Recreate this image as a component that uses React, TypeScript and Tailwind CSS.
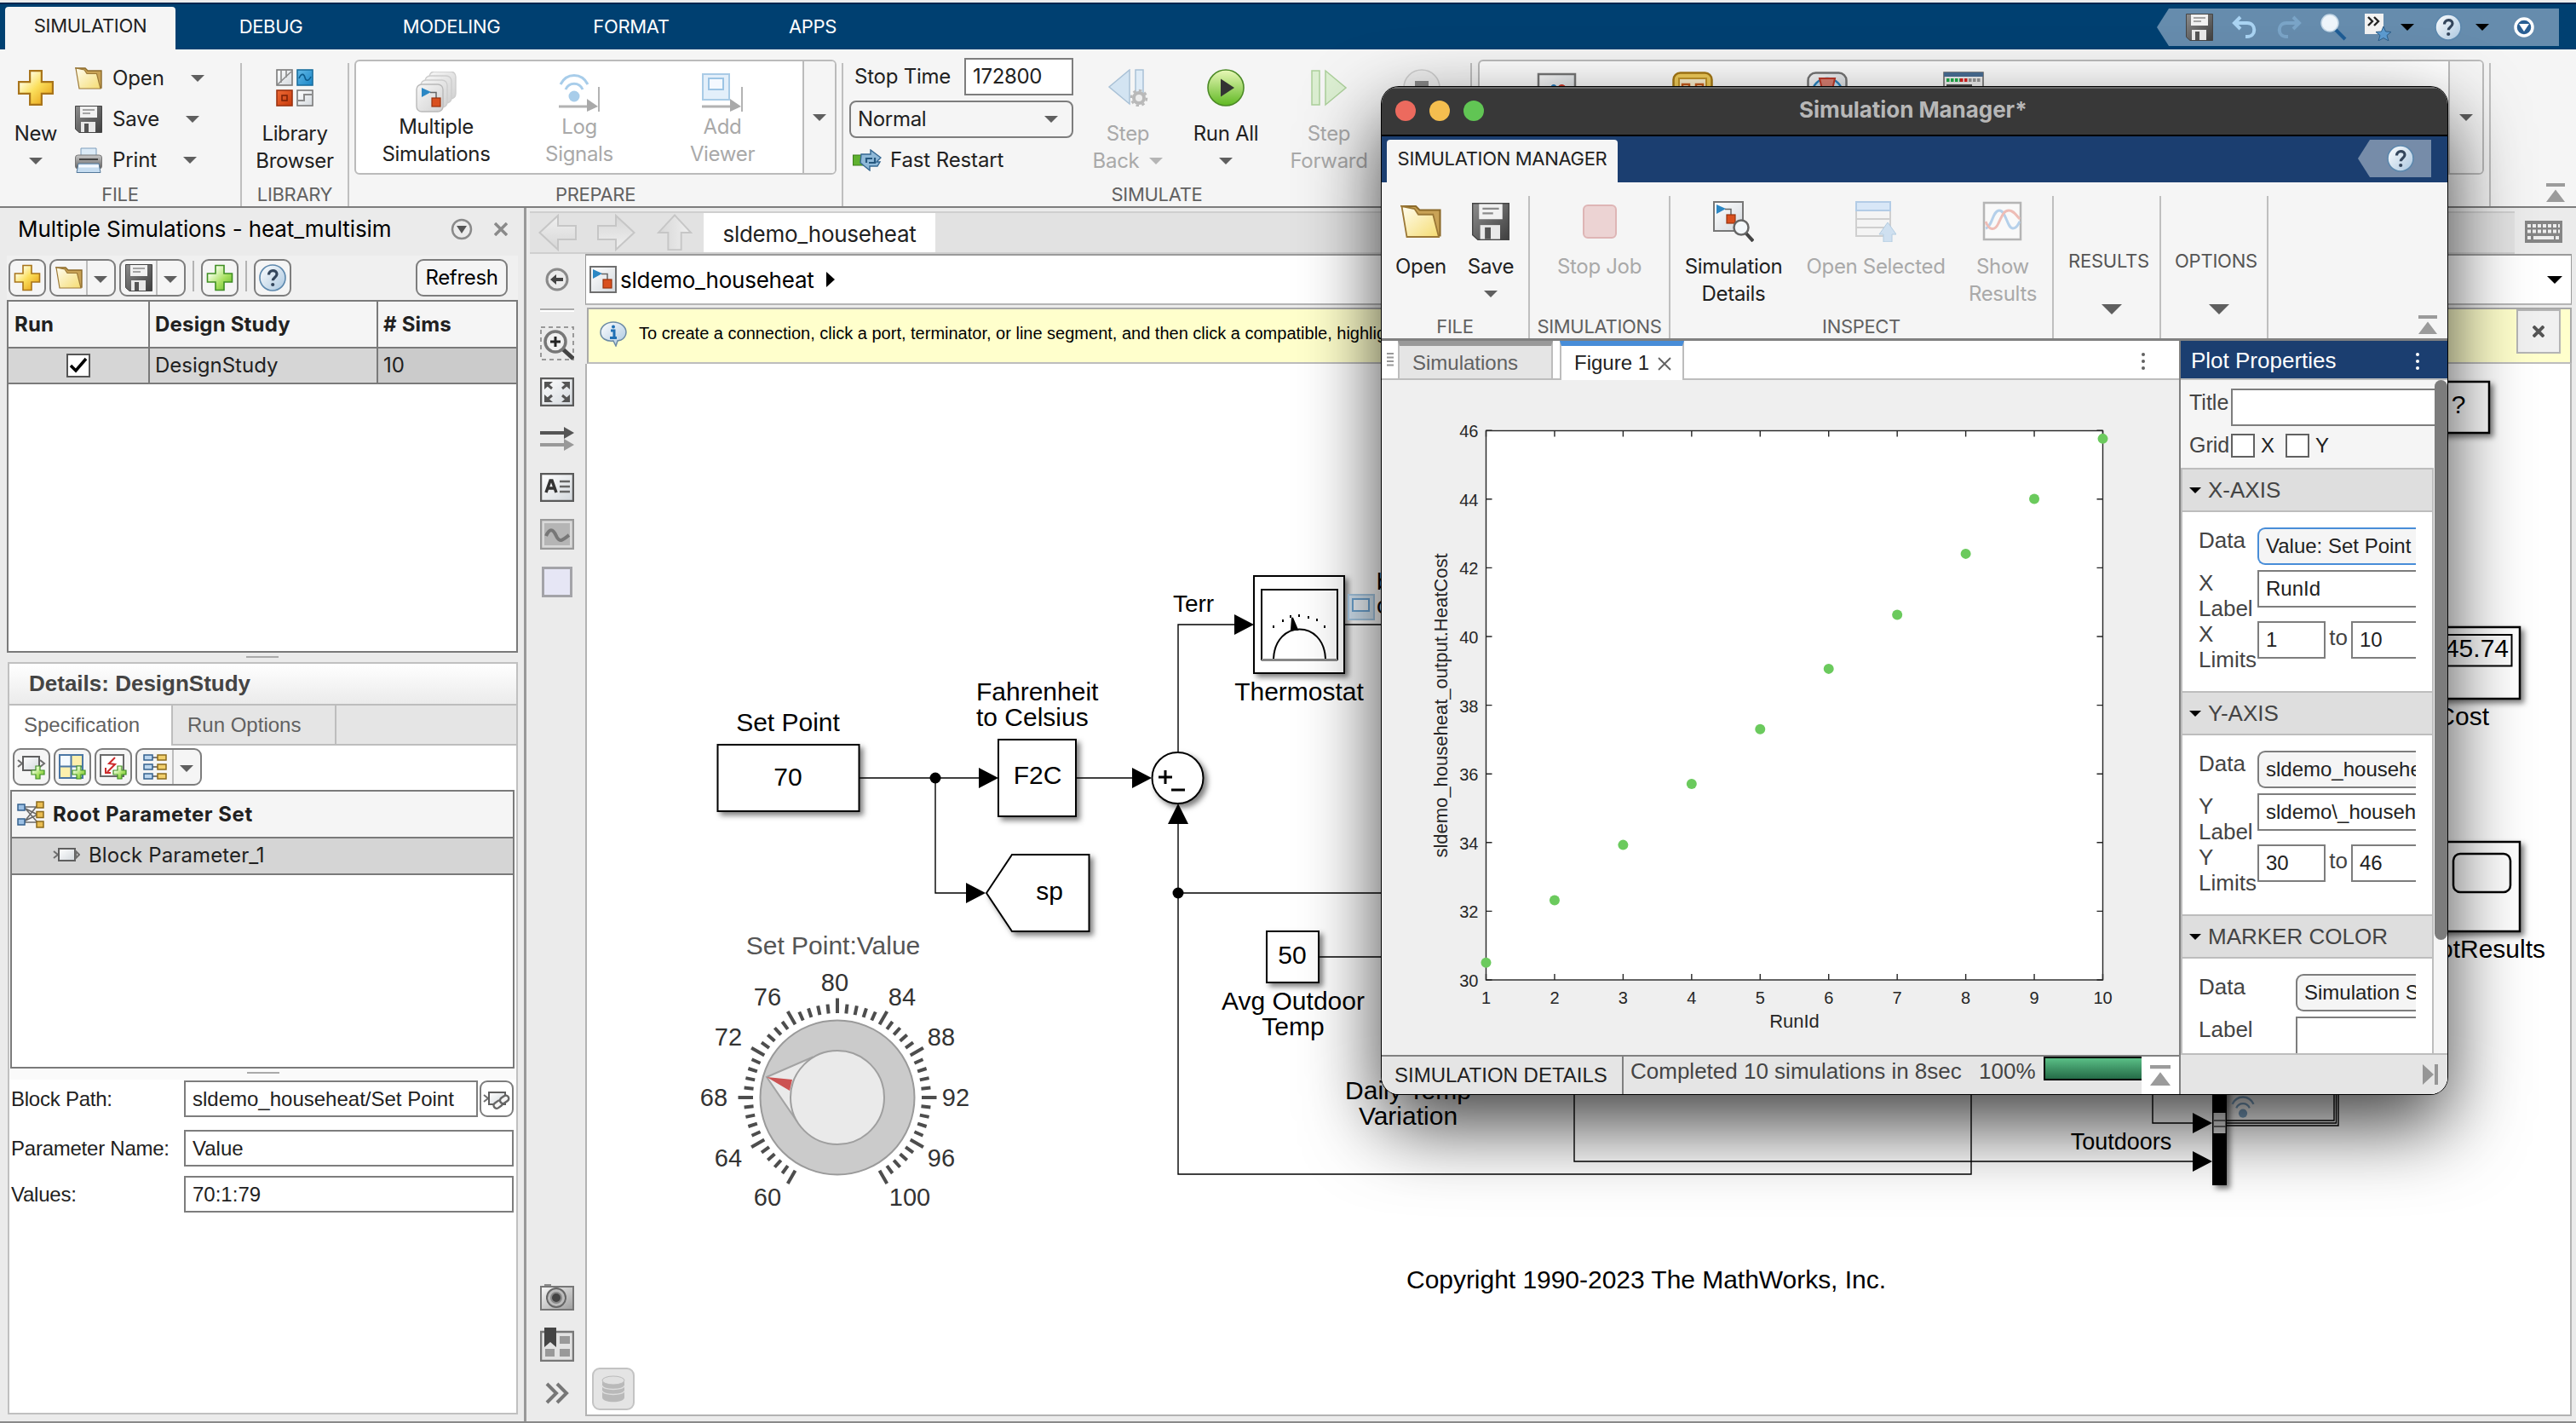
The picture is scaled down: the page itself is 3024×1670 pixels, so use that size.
import React from "react";

type IconProps = { className?: string };

/* ---------- shared gradients ---------- */
function Gradients() {
  const v = (id: string, a: string, b: string, diag = false) => (
    <linearGradient id={id} x1="0" y1="0" x2={diag ? "1" : "0"} y2="1">
      <stop offset="0" stopColor={a} />
      <stop offset="1" stopColor={b} />
    </linearGradient>
  );
  return (
    <svg className="absolute h-0 w-0" aria-hidden="true">
      <defs>
        <linearGradient id="gold" x1="0" y1="0" x2="1" y2="1">
          <stop offset="0.2" stopColor="#fffbd8" />
          <stop offset="0.5" stopColor="#fbdf5c" />
          <stop offset="0.9" stopColor="#e8a317" />
        </linearGradient>
        <linearGradient id="lime" x1="0" y1="0" x2="1" y2="1">
          <stop offset="0.2" stopColor="#f4ffe8" />
          <stop offset="0.6" stopColor="#a8e060" />
          <stop offset="1" stopColor="#5db52a" />
        </linearGradient>
        {v("folder", "#fffdf0", "#f5dc72", true)}
        {v("disk", "#8d8d8d", "#3f3f3f", true)}
        {v("paper", "#ffffff", "#d3d8dd", true)}
        {v("run", "#e9f8b8", "#5fb822")}
        {v("help", "#ffffff", "#a9c6df", true)}
        {v("blue", "#63b9e6", "#1a86c7", true)}
        {v("red", "#ef6a35", "#c63a0c", true)}
        {v("printer", "#c9c9c9", "#5d5d5d")}
        {v("steel", "#fafafa", "#9c9c9c", true)}
        {v("grayArrow", "#f0f0f0", "#d6d6d6")}
        {v("stack", "#f6f6f6", "#d2d2d2", true)}
      </defs>
    </svg>
  );
}

/* ---------- icons ---------- */
const PLUS = "M11 1.5h10v9.5h9.5v10H21v9.5H11V21H1.5V11H11z";
function Plus({ className, green }: IconProps & { green?: boolean }) {
  return (
    <svg viewBox="0 0 32 32" className={className}>
      <path d={PLUS} fill={green ? "url(#lime)" : "url(#gold)"} stroke={green ? "#3f8f23" : "#a8741a"} strokeWidth="1.6" />
    </svg>
  );
}
function Folder({ className }: IconProps) {
  return (
    <svg viewBox="0 0 32 28" className={className}>
      <path d="M1 2h11l3 3h16v20h-6z" fill="#c9a356" stroke="#8c6a2a" strokeWidth="1.4" />
      <path d="M1 2l4 24h25L25.500 8.500H14l-3-4.500z" fill="url(#folder)" stroke="#9b7836" strokeWidth="1.2" />
    </svg>
  );
}
function Disk({ className }: IconProps) {
  return (
    <svg viewBox="0 0 32 32" className={className}>
      <path d="M0.500 0.500h31v31H5l-4.500-4z" fill="url(#disk)" stroke="#444" />
      <path d="M6 1h20v13H6z" fill="#f1f1f1" />
      <path d="M9 5h14M9 9h9" stroke="#8b8b8b" strokeWidth="1.6" />
      <path d="M7 19h17v12H7z" fill="#e9e9e9" />
      <path d="M11 21h5v10h-5z" fill="#555" />
    </svg>
  );
}
function Printer({ className }: IconProps) {
  return (
    <svg viewBox="0 0 32 31" className={className}>
      <path d="M7 1h18v9H7z" fill="#dcebf7" stroke="#7c9dbb" />
      <rect x="0.500" y="9" width="31" height="16" rx="3" fill="url(#printer)" stroke="#777" />
      <path d="M5 14h22" stroke="#444" strokeWidth="2" />
      <path d="M4 19h24l2 10.500H2z" fill="#c5dcf0" stroke="#54789a" />
      <path d="M4 22h24" stroke="#f4f9ff" strokeWidth="3" />
    </svg>
  );
}
function LibraryGrid({ className }: IconProps) {
  return (
    <svg viewBox="0 0 44 44" className={className}>
      <g strokeWidth="1.6">
        <rect x="1" y="1" width="18" height="18" fill="url(#paper)" stroke="#7a7a7a" />
        <path d="M6 1v15M12 1v9M2 18L18 3" stroke="#8a8a8a" fill="none" />
        <rect x="25" y="1" width="18" height="18" fill="url(#blue)" stroke="#1b6f9f" />
        <path d="M27 11c3-7 6-5 7-1s4 5 7-1" stroke="#0d5b8c" fill="none" />
        <rect x="1" y="25" width="18" height="18" fill="url(#red)" stroke="#9c3311" />
        <rect x="7" y="31" width="6" height="6" fill="none" stroke="#7e2408" />
        <rect x="25" y="25" width="18" height="18" fill="url(#paper)" stroke="#7a7a7a" />
        <path d="M26 37h7v-7h9" stroke="#8a8a8a" fill="none" strokeWidth="2" />
      </g>
    </svg>
  );
}
function ModelGlyph() {
  return (
    <g>
      <path d="M4 4l11 5-11 6z" fill="#2b87c4" />
      <path d="M14 9.500h7v8" fill="none" stroke="#666" strokeWidth="1.500" />
      <rect x="16" y="16" width="10" height="10" fill="#d9501f" stroke="#98320e" strokeWidth="1.200" />
    </g>
  );
}
function MultiSim({ className }: IconProps) {
  return (
    <svg viewBox="0 0 48 48" className={className}>
      {[15, 10, 5].map((o) => (
        <rect key={o} x={1 + o} y={15 - o} width="31" height="32" rx="6" fill="url(#stack)" stroke="#cdcdcd" strokeWidth="1.400" />
      ))}
      <rect x="1" y="15" width="31" height="32" rx="6" fill="url(#stack)" stroke="#b9b9b9" strokeWidth="1.400" />
      <g transform="translate(3 15)">
        <ModelGlyph />
      </g>
    </svg>
  );
}
function WifiArcs({ color }: { color: string }) {
  return (
    <g fill="none" stroke={color}>
      <path d="M2 15C9 1 27 1 34 15" strokeWidth="3" />
      <path d="M8 21c4-9 16-9 20 0" strokeWidth="3" />
      <circle cx="18" cy="29" r="6.500" fill={color} stroke="none" />
    </g>
  );
}
function LogSignals({ className }: IconProps) {
  return (
    <svg viewBox="0 0 48 48" className={className}>
      <WifiArcs color="#a8cdea" />
      <path d="M0 41h40" stroke="#b3b3b3" strokeWidth="3" />
      <path d="M33 32v15l13-6z" fill="#a9a9a9" />
      <path d="M47 18v29" stroke="#b3b3b3" strokeWidth="2" />
    </svg>
  );
}
function AddViewer({ className }: IconProps) {
  return (
    <svg viewBox="0 0 48 48" className={className}>
      <rect x="1" y="3" width="31" height="30" fill="#e3effa" stroke="#a9cbe6" strokeWidth="2" />
      <rect x="8" y="8" width="17" height="13" fill="#f4f9ff" stroke="#9cc4e4" strokeWidth="2" />
      <path d="M0 41h40" stroke="#b3b3b3" strokeWidth="3" />
      <path d="M33 32v15l13-6z" fill="#a9a9a9" />
      <path d="M47 18v29" stroke="#b3b3b3" strokeWidth="2" />
    </svg>
  );
}
function StepBack({ className }: IconProps) {
  return (
    <svg viewBox="0 0 48 44" className={className}>
      <path d="M2 21L26 1v40z" fill="#d3e4f2" stroke="#a9c1d6" strokeWidth="1.500" />
      <rect x="33" y="1" width="9" height="32" fill="#dfecf7" stroke="#a9c1d6" strokeWidth="1.500" />
      <circle cx="37" cy="34" r="6" fill="#ededed" stroke="#b9b9b9" strokeWidth="4" />
      <circle cx="37" cy="34" r="9" fill="none" stroke="#b9b9b9" strokeWidth="2.500" strokeDasharray="3.500 3.500" />
    </svg>
  );
}
function RunIcon({ className }: IconProps) {
  return (
    <svg viewBox="0 0 44 44" className={className}>
      <circle cx="22" cy="22" r="21" fill="url(#run)" stroke="#4c8a26" strokeWidth="1.600" />
      <path d="M16 11.500v21L32 22z" fill="#333" />
    </svg>
  );
}
function StepForward({ className }: IconProps) {
  return (
    <svg viewBox="0 0 44 44" className={className}>
      <rect x="2" y="2" width="9" height="40" fill="#dcefd2" stroke="#acd09b" strokeWidth="1.500" />
      <path d="M18 2v40L42 22z" fill="#dcefd2" stroke="#acd09b" strokeWidth="1.500" />
    </svg>
  );
}
function StopRound({ className }: IconProps) {
  return (
    <svg viewBox="0 0 44 44" className={className}>
      <circle cx="22" cy="22" r="21" fill="#efefef" stroke="#cfcfcf" strokeWidth="1.500" />
      <rect x="14" y="14" width="16" height="16" fill="#8a8a8a" />
    </svg>
  );
}
function FastRestart({ className }: IconProps) {
  return (
    <svg viewBox="0 0 34 26" className={className}>
      <rect x="0.500" y="7" width="14" height="12" fill="#5fb12f" stroke="#3c7d1c" />
      <path d="M10 6h11V1l12 9-5 5h4l-3 5h-9v5L9 16z" fill="#8fb9d8" stroke="#346791" strokeWidth="1.400" />
      <path d="M16 16v-5h7M26 10v6h-7" fill="none" stroke="#26587f" strokeWidth="2.200" />
    </svg>
  );
}
function HelpRound({ className }: IconProps) {
  return (
    <svg viewBox="0 0 32 32" className={className}>
      <circle cx="16" cy="16" r="15" fill="url(#help)" stroke="#5d88ad" strokeWidth="1.600" />
      <path d="M11.500 12.500c0-6.500 9.500-6.300 9.500-.8 0 3.700-4.700 3.700-4.700 7.600" fill="none" stroke="#34465c" strokeWidth="3.200" />
      <circle cx="16.200" cy="24" r="2.100" fill="#34465c" />
    </svg>
  );
}
function Down({ className = "w-4 text-[#5f5f5f]" }: IconProps) {
  return (
    <svg viewBox="0 0 16 8" className={className}>
      <path d="M0 0h16L8 8z" fill="currentColor" />
    </svg>
  );
}
function Collapse({ className }: IconProps) {
  return (
    <svg viewBox="0 0 22 22" className={className}>
      <path d="M0 0h22v4H0zM11 7.500L22 22H0z" fill="#9b9b9b" />
    </svg>
  );
}
function ModelFile({ className }: IconProps) {
  return (
    <svg viewBox="0 0 32 32" className={className}>
      <rect x="1" y="1" width="30" height="30" fill="url(#paper)" stroke="#6f6f6f" strokeWidth="2" />
      <ModelGlyph />
    </svg>
  );
}
function SmallBlock({ className, link }: IconProps & { link?: boolean }) {
  return (
    <svg viewBox="0 0 32 24" className={className}>
      <path d="M1 7l5 4-5 4" fill="none" stroke="#6d6d6d" strokeWidth="2" />
      <rect x="7" y="4" width="19" height="14" fill="url(#paper)" stroke="#5f5f5f" strokeWidth="2" />
      {link ? (
        <g fill="#f5f5f5" stroke="#666" strokeWidth="2.400">
          <rect x="12" y="15" width="11" height="7" rx="3.500" transform="rotate(-35 17 18)" />
          <rect x="20" y="9" width="11" height="7" rx="3.500" transform="rotate(-35 25 13)" />
        </g>
      ) : (
        <path d="M27 7l4 4-4 4z" fill="none" stroke="#6d6d6d" strokeWidth="2" />
      )}
    </svg>
  );
}
function PlusBadge() {
  return <path d="M22 15h5v5h5v5h-5v5h-5v-5h-5v-5h5z" fill="url(#lime)" stroke="#3f8f23" strokeWidth="1.200" />;
}
function AddBlock({ className }: IconProps) {
  return (
    <svg viewBox="0 0 34 32" className={className}>
      <path d="M1 8l5 4-5 4" fill="none" stroke="#6d6d6d" strokeWidth="2" />
      <rect x="7" y="4" width="19" height="16" fill="url(#paper)" stroke="#5f5f5f" strokeWidth="2" />
      <path d="M27 8l5 4-5 4" fill="none" stroke="#6d6d6d" strokeWidth="2" />
      <PlusBadge />
    </svg>
  );
}
function AddVariable({ className }: IconProps) {
  return (
    <svg viewBox="0 0 34 32" className={className}>
      <rect x="2" y="2" width="27" height="27" fill="#fdf0ad" stroke="#4b77a4" strokeWidth="2" />
      <path d="M3 3h12v12H3zM16 16h12v12H16z" fill="#f4faff" />
      <path d="M15.500 2v27M2 15.500h27" stroke="#4b77a4" strokeWidth="2" />
      <PlusBadge />
    </svg>
  );
}
function AddFault({ className }: IconProps) {
  return (
    <svg viewBox="0 0 34 32" className={className}>
      <rect x="2" y="2" width="27" height="25" fill="#fff" stroke="#6a6a6a" strokeWidth="2" />
      <path d="M19 5l-7 7 7 1-9 9M8 17v6h6" fill="none" stroke="#cc2a2a" strokeWidth="2" />
      <PlusBadge />
    </svg>
  );
}
function ParamRows({ className }: IconProps) {
  return (
    <svg viewBox="0 0 28 32" className={className}>
      {[2, 13, 24].map((y) => (
        <g key={y} strokeWidth="1.500">
          <path d={`M10 ${y + 3}h8`} stroke="#555" />
          <rect x="1" y={y} width="10" height="6" fill="#bcd6ee" stroke="#35618f" />
          <rect x="17" y={y} width="10" height="6" fill="#f1cf6c" stroke="#8a6a1c" />
        </g>
      ))}
    </svg>
  );
}
function RootSet({ className }: IconProps) {
  return (
    <svg viewBox="0 0 32 32" className={className}>
      <path d="M8 7l16 18M8 25L24 5M8 8l16 8M8 24l16-8M8 7h16M8 25h16" stroke="#6a6a6a" strokeWidth="1.600" />
      {[4, 21].map((y) => (
        <rect key={y} x="1" y={y} width="8" height="7" fill="#9cc0e4" stroke="#35618f" strokeWidth="1.500" />
      ))}
      {[1, 12.5, 24].map((y) => (
        <rect key={y} x="23" y={y} width="8" height="7" fill="#e9bd52" stroke="#8a6a1c" strokeWidth="1.500" />
      ))}
    </svg>
  );
}

/* ---------- ribbon parts ---------- */
const HELV = "font-['Liberation_Sans',Arial,sans-serif] tracking-normal";

function Divider() {
  return <div className="mt-4 w-[2px] shrink-0 bg-[#bfbfbf]" />;
}
function Section({ label, width, children }: { label: string; width: string; children?: React.ReactNode }) {
  return (
    <div className={`flex shrink-0 flex-col ${width}`}>
      <div className="flex min-h-0 flex-1">{children}</div>
      <div className="h-[28px] text-center text-[22px] leading-[28px] whitespace-nowrap text-[#616161]">{label}</div>
    </div>
  );
}
function BigButton({
  icon, lines, width, off, arrow, pad = "pt-[23px]", gap = "mt-4",
}: {
  icon: React.ReactNode; lines: string[]; width: string; off?: boolean; arrow?: boolean; pad?: string; gap?: string;
}) {
  return (
    <div className={`flex shrink-0 flex-col items-center ${pad} ${width} ${off ? "text-[#a9a9a9]" : "text-[#212121]"}`}>
      {icon}
      <div className={`flex flex-col items-center text-[24px] leading-8 whitespace-nowrap ${gap}`}>
        {lines.map((l) => (
          <div key={l}>{l}</div>
        ))}
        {arrow && (
          <div className="flex h-8 items-center">
            <Down />
          </div>
        )}
      </div>
    </div>
  );
}
function FileRow({ icon, label }: { icon: React.ReactNode; label: string }) {
  return (
    <div className="flex h-12 items-center text-[24px] leading-none tracking-[-0.005em] text-[#212121]">
      <div className="mr-[12px] w-8">{icon}</div>
      {label}
      <Down className="ml-[31px] w-4 text-[#5f5f5f]" />
    </div>
  );
}

function QuickAccess() {
  return (
    <div className="mt-[5px] mr-5 ml-auto flex h-11 w-[472px] items-center bg-[#668cad] pl-[34px] [clip-path:polygon(14px_0,100%_0,100%_100%,14px_100%,0_50%)]">
      <Disk className="w-8" />
      <svg viewBox="0 0 32 32" className="ml-[22px] w-8">
        <path d="M10 4L3 11l7 7M4 11h14c11 0 11 16 0 16h-2" fill="none" stroke="#a9d3f2" strokeWidth="4" />
      </svg>
      <svg viewBox="0 0 32 32" className="ml-[18px] w-8 opacity-50">
        <path d="M22 4l7 7-7 7M28 11H14C3 11 3 27 14 27h2" fill="none" stroke="#8dbce2" strokeWidth="4" />
      </svg>
      <svg viewBox="0 0 32 32" className="ml-[21px] w-8">
        <path d="M18 18l12 12" stroke="#1e5c95" strokeWidth="4" />
        <circle cx="12" cy="11" r="10" fill="#eef5fb" stroke="#c2d6e6" strokeWidth="1.500" />
      </svg>
      <svg viewBox="0 0 32 32" className="ml-[20px] w-8">
        <path d="M1 0h22v24H1z" fill="#f2f2f2" />
        <path d="M5 4l5 5-5 5M12 4l5 5-5 5" fill="none" stroke="#222" strokeWidth="2.400" />
        <path d="M23 15l2.500 6 6.500.500-5 4 2 6.500-6-3.500-6 3.500 2-6.500-5-4 6.500-.5z" fill="#5c9bd0" stroke="#2f5f8a" />
      </svg>
      <Down className="ml-[11px] w-4 text-black" />
      <HelpRound className="ml-6 w-8" />
      <Down className="ml-4 w-4 text-black" />
      <svg viewBox="0 0 24 24" className="ml-[29px] w-6">
        <circle cx="12" cy="12" r="10" fill="#2a5f93" stroke="#fff" strokeWidth="3.500" />
        <path d="M6 8h12l-6 9z" fill="#fff" />
      </svg>
    </div>
  );
}

function MainRibbon() {
  return (
    <header>
      <div className="h-[3px] bg-[#ececec]" />
      <div className="flex h-[55px] border-t-2 border-[#00264f] bg-[#004071] text-[22px] text-white">
        <div className="mt-[3px] ml-[6px] flex w-[200px] items-center justify-center rounded-t bg-[#f5f5f5] pb-[6px] text-[#212121]">SIMULATION</div>
        <div className="flex w-[224px] items-center justify-center pb-px">DEBUG</div>
        <div className="flex w-[200px] items-center justify-center pb-px">MODELING</div>
        <div className="flex w-[222px] items-center justify-center pb-px">FORMAT</div>
        <div className="flex w-[204px] items-center justify-center pb-px">APPS</div>
        <QuickAccess />
      </div>
      <div className="flex h-[186px] border-b-2 border-[#7d7d7d] bg-[#f5f5f5]">
        <Section label="FILE" width="w-[282px]">
          <BigButton icon={<Plus className="h-11 w-11" />} lines={["New"]} arrow width="w-[84px]" />
          <div className="pt-[10px] pl-1">
            <FileRow icon={<Folder className="w-8" />} label="Open" />
            <FileRow icon={<Disk className="w-8" />} label="Save" />
            <FileRow icon={<Printer className="w-8" />} label="Print" />
          </div>
        </Section>
        <Divider />
        <Section label="LIBRARY" width="w-[124px]">
          <BigButton icon={<LibraryGrid className="h-11 w-11" />} lines={["Library", "Browser"]} width="w-[124px]" />
        </Section>
        <Divider />
        <Section label="PREPARE" width="w-[578px]">
          <div className="mt-3 ml-[6px] flex h-[135px] w-[566px] overflow-hidden rounded-md border-2 border-[#bbb] bg-white">
            <BigButton icon={<MultiSim className="h-12 w-12" />} lines={["Multiple", "Simulations"]} width="w-[188px]" pad="pt-[12px]" gap="mt-px" />
            <BigButton icon={<LogSignals className="h-12 w-12" />} lines={["Log", "Signals"]} off width="w-[148px]" pad="pt-[12px]" gap="mt-px" />
            <BigButton icon={<AddViewer className="h-12 w-12" />} lines={["Add", "Viewer"]} off width="w-[188px]" pad="pt-[12px]" gap="mt-px" />
            <div className="flex flex-1 items-center justify-center border-l-2 border-[#bbb] bg-[#f5f5f5]">
              <Down />
            </div>
          </div>
        </Section>
        <Divider />
        <Section label="SIMULATE" width="w-[736px]">
          <div className="ml-[7px] flex w-[263px] flex-col pt-[10px] text-[24px] leading-none text-[#212121]">
            <div className="flex h-11 items-center justify-between pl-[6px]">
              <span className="tracking-[-0.01em]">Stop Time</span>
              <div className="flex h-11 w-[128px] items-center border-2 border-[#7d7d7d] bg-white pl-2">172800</div>
            </div>
            <div className="mt-[6px] flex h-11 items-center justify-between rounded-lg border-2 border-[#7d7d7d] pr-[16px] pl-[8px]">
              Normal
              <Down />
            </div>
            <div className="mt-[6px] flex h-10 items-center gap-[10px] pl-1 tracking-[-0.005em]">
              <FastRestart className="w-[34px]" />
              Fast Restart
            </div>
          </div>
          <div className="flex w-[128px] flex-col items-center pt-[23px] text-[24px] leading-8 text-[#a9a9a9]">
            <StepBack className="h-11 w-12" />
            <div className="mt-4">Step</div>
            <div className="flex items-center gap-3">
              Back <Down className="w-4 text-[#b5b5b5]" />
            </div>
          </div>
          <BigButton icon={<RunIcon className="h-11 w-11" />} lines={["Run All"]} arrow width="w-[102px]" />
          <BigButton icon={<StepForward className="h-11 w-11" />} lines={["Step", "Forward"]} off width="w-[140px]" />
          <BigButton icon={<StopRound className="h-11 w-11" />} lines={["Stop"]} off width="w-[78px]" />
        </Section>
        <Divider />
        <Section label="REVIEW RESULTS" width="w-[1194px]">
          <div className="mt-3 ml-[7px] flex h-[135px] w-[1181px] overflow-hidden rounded-md border-2 border-[#bbb] bg-white">
            <div className="flex flex-1 pt-3 pl-[67px]">
              <svg viewBox="0 0 48 48" className="h-12 w-12">
                <rect x="2" y="3" width="43" height="43" fill="url(#paper)" stroke="#777" strokeWidth="2.500" />
                <path d="M12 36c5-26 10-26 18 0" fill="none" stroke="#2b7fc0" strokeWidth="3" />
                <path d="M20 36c5-26 13-26 21 0" fill="none" stroke="#d43a2a" strokeWidth="3" />
              </svg>
              <svg viewBox="0 0 48 48" className="ml-[111px] h-12 w-12">
                <rect x="1.500" y="1.500" width="45" height="45" rx="8" fill="#f4cf5a" stroke="#a97b16" strokeWidth="2.500" />
                <rect x="8" y="8" width="32" height="30" fill="#fff3d0" stroke="#c8992a" strokeWidth="2" />
                <path d="M12 36V15h8v21M28 36V15h8v21" fill="none" stroke="#c85c1c" strokeWidth="2.500" />
              </svg>
              <svg viewBox="0 0 48 48" className="ml-[110px] h-12 w-12">
                <rect x="1.500" y="1.500" width="45" height="45" rx="9" fill="url(#paper)" stroke="#777" strokeWidth="2.500" />
                <circle cx="24" cy="26" r="18" fill="#c9e4f5" stroke="#2b87c4" strokeWidth="2.500" />
                <path d="M15 8h18l-7 30h-4z" fill="#dd8274" stroke="#c03a2a" strokeWidth="2" />
              </svg>
              <svg viewBox="0 0 48 48" className="ml-[112px] h-12 w-12">
                <rect x="1" y="1" width="46" height="46" fill="#f4f4f4" stroke="#666" strokeWidth="1.500" />
                <rect x="1" y="1" width="46" height="5" fill="#4a6f96" />
                <path d="M4 10h16" stroke="#20b04a" strokeWidth="4" strokeDasharray="3.500 1.500" />
                <path d="M20 10h9" stroke="#d22" strokeWidth="4" strokeDasharray="3.500 1.500" />
                <path d="M30 10h15" stroke="#999" strokeWidth="4" strokeDasharray="3.500 1.500" />
                <rect x="5" y="16" width="28" height="28" fill="#ddd" stroke="#555" strokeWidth="2" />
              </svg>
            </div>
            <div className="flex w-[40px] items-center justify-center border-l-2 border-[#bbb] bg-[#f5f5f5]">
              <Down />
            </div>
          </div>
        </Section>
        <Divider />
        <div className="flex flex-1 items-end justify-end pr-[13px] pb-[5px]">
          <Collapse className="w-[22px]" />
        </div>
      </div>
    </header>
  );
}

/* ---------- left panel ---------- */
function ToolBtn({ children, width = "w-11", className = "" }: { children: React.ReactNode; width?: string; className?: string }) {
  return <div className={`flex h-11 shrink-0 items-center justify-center rounded-[9px] border-2 border-[#7d7d7d] bg-[#f5f5f5] ${width} ${className}`}>{children}</div>;
}
function SplitBtn({ icon, className = "" }: { icon: React.ReactNode; className?: string }) {
  return (
    <div className={`flex h-11 w-[78px] shrink-0 rounded-[9px] border-2 border-[#7d7d7d] bg-[#f5f5f5] ${className}`}>
      <div className="flex w-[43px] items-center justify-center border-r-2 border-[#bdbdbd]">{icon}</div>
      <div className="flex flex-1 items-center justify-center pt-1 pr-px">
        <Down />
      </div>
    </div>
  );
}
function Field({ label, value, width, pick, className }: { label: string; value: string; width: string; pick?: boolean; className?: string }) {
  return (
    <div className={`flex h-[43px] items-center ${className}`}>
      <div className="w-[205px] shrink-0 pl-[2px] tracking-[-0.01em]">{label}</div>
      <div className={`flex h-full items-center border-2 border-[#7d7d7d] bg-white pl-2 ${width}`}>{value}</div>
      {pick && (
        <div className="ml-[2px] flex h-full w-[40px] items-center justify-center rounded-[9px] border-2 border-[#7d7d7d]">
          <SmallBlock link className="w-8 shrink-0" />
        </div>
      )}
    </div>
  );
}
function LeftPanel() {
  return (
    <aside className="flex w-[615px] shrink-0 flex-col bg-[#ebebeb]">
      <div className="flex h-[56px] items-center pb-[7px] pl-[21px] text-[26px] tracking-[-0.004em] text-black">
        <div className="w-[508px] whitespace-nowrap">Multiple Simulations - heat_multisim</div>
        <svg viewBox="0 0 26 26" className="w-[26px]">
          <circle cx="13" cy="13" r="11" fill="none" stroke="#8a8a8a" strokeWidth="2.500" />
          <path d="M7 9h12l-6 9z" fill="#555" />
        </svg>
        <svg viewBox="0 0 16 16" className="ml-[25px] w-[16px]">
          <path d="M1 1l14 14M15 1L1 15" stroke="#8a8a8a" strokeWidth="3.500" />
        </svg>
      </div>
      <div className="ml-2 flex h-[52px] w-[600px] items-center bg-[#f0f0f0] pl-[2px]">
        <ToolBtn><Plus className="w-8" /></ToolBtn>
        <SplitBtn className="ml-1" icon={<Folder className="w-8" />} />
        <SplitBtn className="ml-1" icon={<Disk className="w-8" />} />
        <div className="mx-[8px] mb-1 h-9 w-[2px] bg-[#b3b3b3]" />
        <ToolBtn><Plus green className="w-8" /></ToolBtn>
        <div className="mx-[8px] mb-1 h-9 w-[2px] bg-[#b3b3b3]" />
        <ToolBtn><HelpRound className="w-8" /></ToolBtn>
        <ToolBtn width="w-[108px]" className="mr-3 ml-auto text-[24px]">Refresh</ToolBtn>
      </div>
      <div className="ml-2 h-[414px] w-[600px] border-2 border-[#7a7a7a] bg-white text-[24px] tracking-normal text-[#212121]">
        <div className="flex h-[55px] border-b-2 border-[#7a7a7a] bg-[#f5f5f5] font-bold tracking-[0.008em]">
          <div className="flex w-[166px] items-center border-r-2 border-[#7a7a7a] pl-[7px]">Run</div>
          <div className="flex w-[268px] items-center border-r-2 border-[#7a7a7a] pl-[6px]">Design Study</div>
          <div className="flex flex-1 items-center pl-[6px]"># Sims</div>
        </div>
        <div className="flex h-[42px] border-b-2 border-[#7a7a7a] bg-[#d6d6d6]">
          <div className="flex w-[166px] items-center justify-center border-r-2 border-[#7a7a7a]">
            <svg viewBox="0 0 28 28" className="w-7">
              <rect x="1" y="1" width="26" height="26" fill="#fff" stroke="#555" strokeWidth="2" />
              <path d="M5 14l6 6L23 6" fill="none" stroke="#000" strokeWidth="3.500" />
            </svg>
          </div>
          <div className="flex w-[268px] items-center border-r-2 border-[#7a7a7a] pl-[6px]">DesignStudy</div>
          <div className="flex flex-1 items-center bg-[#cbcbcb] pl-[6px]">10</div>
        </div>
      </div>
      <div className="flex h-[11px] items-center justify-center">
        <div className="mb-px h-[2px] w-[38px] bg-[#aaa]" />
      </div>
      <div className={`ml-[9px] flex h-[883px] w-[599px] flex-col border-2 border-[#c0c0c0] bg-white text-[24px] text-[#212121] ${HELV}`}>
        <div className="flex h-[49px] items-center border-b-2 border-[#bdbdbd] bg-gradient-to-b from-white to-[#ebebeb] pl-[23px] text-[26px] font-bold text-[#444]">
          Details: DesignStudy
        </div>
        <div className="flex h-[47px] text-[#616161]">
          <div className="flex w-[192px] items-center border-r-2 border-[#bdbdbd] pb-[2px] pl-[17px]">Specification</div>
          <div className="flex w-[192px] items-center border-r-2 border-b-2 border-[#bdbdbd] bg-[#e5e5e5] pl-[17px]">Run Options</div>
          <div className="flex-1 border-b-2 border-[#bdbdbd] bg-[#e5e5e5]" />
        </div>
        <div className="flex h-[52px] items-center pb-[2px] pl-[4px]">
          <ToolBtn><AddBlock className="w-[34px]" /></ToolBtn>
          <ToolBtn className="ml-[4px]"><AddVariable className="w-[34px]" /></ToolBtn>
          <ToolBtn className="ml-[4px]"><AddFault className="w-[34px]" /></ToolBtn>
          <SplitBtn className="ml-[4px]" icon={<ParamRows className="w-7" />} />
        </div>
        <div className="ml-[1px] h-[327px] w-[592px] border-2 border-[#7a7a7a] font-[Inter,sans-serif]">
          <div className="flex h-[55px] items-center gap-[10px] border-b-2 border-[#7a7a7a] bg-[#f5f5f5] pl-[6px] font-bold tracking-[0.022em]">
            <RootSet className="w-8" />
            Root Parameter Set
          </div>
          <div className="flex h-[43px] items-center gap-[10px] border-b-2 border-[#7a7a7a] bg-[#d5d5d5] pb-px pl-[48px]">
            <SmallBlock className="w-8" />
            <span className="tracking-[0.005em]">Block Parameter_1</span>
          </div>
        </div>
        <div className="flex h-[13px] items-center justify-center bg-[#fafafa]">
          <div className="mb-[3px] h-[2px] w-[38px] bg-[#aaa]" />
        </div>
        <Field label="Block Path:" value="sldemo_househeat/Set Point" width="w-[345px]" pick className="mt-px" />
        <Field label="Parameter Name:" value="Value" width="w-[387px]" className="mt-[15px]" />
        <Field label="Values:" value="70:1:79" width="w-[387px]" className="mt-[11px]" />
      </div>
    </aside>
  );
}

/* ---------- editor ---------- */
function NavArrow({ turn }: { turn: string }) {
  return (
    <svg viewBox="0 0 46 44" className={turn}>
      <path d="M1.500 22L23 2v12h21v16H23v12z" fill="url(#grayArrow)" stroke="#c6c6c6" strokeWidth="2" />
    </svg>
  );
}
function Palette() {
  return (
    <div className="flex w-[69px] shrink-0 flex-col items-center pr-0 pl-[2px]">
      <svg viewBox="0 0 28 28" className="mt-[16px] w-7">
        <circle cx="14" cy="14" r="12" fill="none" stroke="#8a8a8a" strokeWidth="3" />
        <path d="M6 14l7-6v4h8v4h-8v4z" fill="#444" />
      </svg>
      <div className="mt-[20px] h-[4px] w-[40px] border-b-2 border-white bg-[#aaa]" />
      <svg viewBox="0 0 40 40" className="mt-[17px] w-10">
        <rect x="1" y="1" width="38" height="38" fill="none" stroke="#999" strokeWidth="2" strokeDasharray="5 4" />
        <path d="M27 27l12 11" stroke="#444" strokeWidth="5" />
        <circle cx="18" cy="18" r="12" fill="#f0f0f0" stroke="#777" strokeWidth="3.500" />
        <path d="M12 18h12M18 12v12" stroke="#222" strokeWidth="3" />
      </svg>
      <svg viewBox="0 0 40 34" className="mt-[20px] w-10">
        <rect x="1" y="1" width="38" height="32" fill="url(#paper)" stroke="#5a5a5a" strokeWidth="2.500" />
        <path d="M5 5h10L5 14zM35 5H25l10 9zM5 29h10L5 20zM35 29H25l10-9z" fill="#555" />
        <path d="M8 8l6 5M32 8l-6 5M8 26l6-5M32 26l-6-5" stroke="#555" strokeWidth="3" />
      </svg>
      <svg viewBox="0 0 40 28" className="mt-[24px] w-10">
        <path d="M0 7h30" stroke="#555" strokeWidth="4" />
        <path d="M28 0l12 7-12 7z" fill="#555" />
        <path d="M0 21h30" stroke="#999" strokeWidth="4" />
        <path d="M28 14l12 7-12 7z" fill="#999" />
      </svg>
      <svg viewBox="0 0 40 34" className="mt-[26px] w-10">
        <rect x="1" y="1" width="38" height="32" fill="url(#paper)" stroke="#5a5a5a" strokeWidth="2.500" />
        <path d="M7 23l5-14h2l5 14M9 18h8" fill="none" stroke="#333" strokeWidth="3.500" />
        <path d="M23 10h12M23 16h12M23 22h12" stroke="#666" strokeWidth="2.500" />
      </svg>
      <svg viewBox="0 0 40 36" className="mt-[20px] w-10">
        <rect x="1" y="1" width="38" height="34" fill="#d9d9d9" stroke="#999" strokeWidth="2.500" />
        <rect x="5" y="5" width="30" height="26" fill="#b5b5b5" />
        <path d="M7 20c4-9 8-9 12 0s8 4 15-1" fill="none" stroke="#777" strokeWidth="4" />
      </svg>
      <div className="mt-[20px] h-9 w-9 border-[3px] border-[#a3a3a8] bg-[#e6e6f5]" />
      <svg viewBox="0 0 40 32" className="mt-auto w-10">
        <path d="M5 1h8v4H5z" fill="#8a8a8a" />
        <rect x="1" y="4" width="38" height="27" fill="url(#steel)" stroke="#777" strokeWidth="2" />
        <circle cx="19" cy="17" r="11" fill="#bbb" stroke="#666" strokeWidth="2" />
        <circle cx="19" cy="17" r="6" fill="#444" stroke="#888" strokeWidth="2" />
      </svg>
      <svg viewBox="0 0 40 40" className="mt-[20px] w-10">
        <rect x="1" y="5" width="38" height="34" fill="#e2e2e2" stroke="#777" strokeWidth="2.500" />
        <path d="M23 10h12v9H23zM6 25h11v9H6zM23 25h12v9H23z" fill="#999" />
        <path d="M5 0h14v23l-7-6-7 6z" fill="#444" />
      </svg>
      <svg viewBox="0 0 28 26" className="mt-[24px] mb-[20px] w-7">
        <path d="M2 2l11 11L2 24M14 2l11 11-11 11" fill="none" stroke="#777" strokeWidth="4" />
      </svg>
    </div>
  );
}

function Knob() {
  const cx = 983, cy = 1288;
  const ticks = Array.from({ length: 51 }, (_, i) => {
    const a = ((240 - i * 6) * Math.PI) / 180;
    const r1 = 99, r2 = i % 5 === 0 ? 116.5 : 110;
    return (
      <line
        key={i}
        x1={cx + r1 * Math.cos(a)} y1={cy - r1 * Math.sin(a)}
        x2={cx + r2 * Math.cos(a)} y2={cy - r2 * Math.sin(a)}
        stroke="#4d4d4d" strokeWidth="4"
      />
    );
  });
  const labels: [string, number, number][] = [
    ["80", 980, 1163], ["76", 901, 1180], ["84", 1059, 1180], ["72", 855, 1227], ["88", 1105, 1227],
    ["68", 838, 1298], ["92", 1122, 1298], ["64", 855, 1369], ["96", 1105, 1369], ["60", 901, 1415], ["100", 1068, 1415],
  ];
  return (
    <g>
      <text x="978" y="1120" fill="#555">Set Point:Value</text>
      {ticks}
      <circle cx={cx} cy={cy} r="90.500" fill="#cbcbcb" stroke="#9a9a9a" strokeWidth="2" />
      <path d="M900 1264L953 1241L935 1315z" fill="#eaeaea" stroke="#a3a3a3" strokeWidth="2" />
      <circle cx={cx} cy={cy} r="55" fill="#eaeaea" stroke="#9f9f9f" strokeWidth="2" />
      <path d="M900 1264L930 1267L927 1280z" fill="#cc5252" />
      {labels.map(([t, x, y]) => (
        <text key={t} x={x} y={y} fill="#333" fontSize="29">{t}</text>
      ))}
    </g>
  );
}
const arrowRight = (x: number, y: number) => `M${x - 23} ${y - 12}L${x} ${y}L${x - 23} ${y + 12}z`;

function Diagram() {
  return (
    <svg viewBox="689 427 2330 1234" className="block h-[1234px] w-[2330px] font-['Liberation_Sans',Arial,sans-serif] tracking-normal" textAnchor="middle" fontSize="30">
      <defs>
        <filter id="drop" x="-20%" y="-20%" width="150%" height="150%">
          <feDropShadow dx="4" dy="4" stdDeviation="3" floodColor="#000" floodOpacity="0.5" />
        </filter>
      </defs>
      <g fill="none" stroke="#000" strokeWidth="1.400">
        <path d="M1008 913H1150M1098 913V1048H1136M1263 913H1330M1383 883V733H1450M1578 733H1700" />
        <path d="M1383 965V1378H2314V1200M1383 1048H1700M1548 1123H1700" />
        <path d="M1848 1200V1363H2576M2527 1200V1318H2576" />
        <path d="M2614 1315H2740V1200M2614 1318H2742.500V1200M2614 1321H2745V1200" />
      </g>
      <g>
        <circle cx="1098" cy="913" r="6.500" />
        <circle cx="1383" cy="1048" r="6.500" />
        <path d={[arrowRight(1172, 913), arrowRight(1352, 913), arrowRight(1157, 1048), arrowRight(1472, 733), arrowRight(2597, 1363), arrowRight(2597, 1318)].join("")} />
        <path d="M1383 943l12 24h-24z" />
      </g>
      <g fill="#fff" stroke="#000" strokeWidth="2" filter="url(#drop)">
        <rect x="842.500" y="874" width="166" height="78" />
        <rect x="1172" y="868" width="91" height="90" />
        <path d="M1158 1048L1188 1003H1278.500V1093H1188z" />
        <circle cx="1382.500" cy="913" r="30" />
        <rect x="1472" y="676" width="106" height="114" />
        <rect x="1487" y="1093" width="61" height="60" />
        <rect x="2800" y="448" width="122" height="60" strokeWidth="2.500" />
        <rect x="2800" y="736" width="158" height="84" strokeWidth="2.500" />
        <rect x="2840" y="988" width="118" height="105" strokeWidth="2.500" />
        <rect x="2598" y="1200" width="15" height="190" fill="#000" />
      </g>
      <g fill="none" stroke="#000" strokeWidth="2">
        <rect x="1481" y="692" width="89" height="82" fill="#fff" />
        <path d="M1481 774.500h89" stroke="#888" strokeWidth="3" />
        <path d="M1495 773c2-46 59-46 61 0" />
        <path d="M1517 725l6 14h-7z" fill="#000" />
        <path d="M1495 734v3M1506 727v3M1515 722v3M1525 721v3M1536 723v3M1546 726v3M1555 734v3" />
        <rect x="1583" y="698" width="30" height="29" stroke="#a9cbe6" fill="#d7e8f6" />
        <rect x="1588" y="703" width="19" height="14" stroke="#6fa6d4" fill="#f1f7fd" />
        <rect x="2820" y="745" width="128.500" height="36.500" />
        <rect x="2880" y="1002" width="67" height="45" rx="8" strokeWidth="2.500" fill="#fff" />
      </g>
      <rect x="2598.500" y="1306" width="14" height="24" fill="#ddd" />
      <path d="M2599 1315h14M2599 1322h14" stroke="#444" strokeWidth="1.500" />
      <g transform="translate(2619 1284) scale(0.780)">
        <WifiArcs color="#7fa6c8" />
      </g>
      <g>
        <text x="925" y="858">Set Point</text>
        <text x="925" y="922">70</text>
        <text x="1146" y="822" textAnchor="start">Fahrenheit</text>
        <text x="1146" y="852" textAnchor="start">to Celsius</text>
        <text x="1218" y="920">F2C</text>
        <text x="1401" y="718" fontSize="28">Terr</text>
        <text x="1525" y="822">Thermostat</text>
        <text x="1232" y="1056">sp</text>
        <text x="1517" y="1131">50</text>
        <text x="1518" y="1185">Avg Outdoor</text>
        <text x="1518" y="1215">Temp</text>
        <text x="1653" y="1290">Daily Temp</text>
        <text x="1653" y="1320">Variation</text>
        <text x="1616" y="692" textAnchor="start" fontSize="28">blower</text>
        <text x="1616" y="720" textAnchor="start" fontSize="28">cmd</text>
        <text x="2490" y="1349" fontSize="27">Toutdoors</text>
        <text x="2886" y="485">?</text>
        <text x="2945" y="771" textAnchor="end">45.74</text>
        <text x="2922" y="851" textAnchor="end">Cost</text>
        <text x="2988" y="1124" textAnchor="end">PlotResults</text>
        <text x="1651" y="1512" textAnchor="start" textLength="563">Copyright 1990-2023 The MathWorks, Inc.</text>
      </g>
      <g stroke="#000" strokeWidth="3">
        <path d="M1360 912h16M1368 904v16M1375 927h16" />
      </g>
      <Knob />
    </svg>
  );
}

function Editor() {
  return (
    <main className="flex min-w-0 flex-1 flex-col border-l-[3px] border-[#999] bg-[#ebebeb]">
      <div className="flex h-[54px] pt-1 pl-1">
        <div className="flex w-[2330px] border-y-2 border-[#cfcfcf] bg-[#e2e2e2]">
          <div className="flex w-[204px] items-center pl-[10px]">
            <NavArrow turn="w-[46px]" />
            <NavArrow turn="ml-[22px] w-[46px] rotate-180" />
            <NavArrow turn="ml-[24px] w-[44px] rotate-90" />
          </div>
          <div className="flex w-[272px] items-center justify-center bg-white pt-[3px] text-[26px] tracking-[-0.01em] text-[#212121]">sldemo_househeat</div>
        </div>
        <svg viewBox="0 0 44 26" className="mt-[11px] ml-3 h-[26px] w-11">
          <rect width="44" height="26" fill="#858585" />
          <path d="M3 6h38M3 12.500h38M3 20h5M36 20h5" stroke="#eee" strokeWidth="4" strokeDasharray="4 2" />
          <path d="M10 20h24" stroke="#eee" strokeWidth="4" />
        </svg>
      </div>
      <div className="flex min-h-0 flex-1">
        <Palette />
        <div className="flex w-[2332px] flex-col">
          <div className="flex h-[60px] items-center border border-t-2 border-b-2 border-[#9a9a9a] border-b-[#b5b5b5] bg-white pl-1 text-[26px] text-black">
            <ModelFile className="w-8" />
            <span className="ml-[4px] w-[229px] tracking-[-0.009em]">sldemo_househeat</span>
            <svg viewBox="0 0 10 18" className="ml-[13px] w-[10px]">
              <path d="M0 0l10 9-10 9z" />
            </svg>
            <Down className="mr-[10px] ml-auto w-[18px] text-black" />
          </div>
          <div className={`mt-[3px] ml-[2px] flex h-[66px] items-start border-2 border-[#a9a9a9] border-b-[#bdbdbd] bg-[#ffffcc] text-[20px] text-black ${HELV}`}>
            <svg viewBox="0 0 32 30" className="mt-[14px] ml-[13px] w-8 shrink-0">
              <path d="M16 1c8 0 15 5 15 12 0 4-3 8-6 9l-4 1-2 6-3-6C8 24 1 20 1 13S8 1 16 1z" fill="url(#help)" stroke="#6b8aa5" strokeWidth="1.500" />
              <path d="M13 11h4v8M12 19.500h8" fill="none" stroke="#1e6fb4" strokeWidth="3" />
              <circle cx="16" cy="6.500" r="2" fill="#1e6fb4" />
            </svg>
            <span className="mt-[13px] ml-[14px] whitespace-nowrap">
              To create a connection, click a port, terminator, or line segment, and then click a compatible, highlighted port.
            </span>
            <div className="mr-[11px] ml-auto flex h-[52px] w-[52px] items-center justify-center border-2 border-[#b5b5b5] bg-[#f0f0f0]">
              <svg viewBox="0 0 16 16" className="w-[14px]">
                <path d="M1 1l14 14M15 1L1 15" stroke="#555" strokeWidth="4.500" />
              </svg>
            </div>
          </div>
          <div className="relative h-[1235px] overflow-hidden border-r-2 border-b-2 border-l-2 border-[#b3b3b3] bg-white">
            <Diagram />
            <div className="absolute bottom-[5px] left-[6px] flex h-[50px] w-[50px] items-center justify-center rounded-[9px] border-2 border-[#c3c3c3] bg-[#e4e4e4]">
              <svg viewBox="0 0 28 32" className="w-7">
                <path d="M1 6v20c0 7 26 7 26 0V6" fill="#b9b9b9" />
                <path d="M1 12c0 6 26 6 26 0M1 18c0 6 26 6 26 0" fill="none" stroke="#ddd" strokeWidth="1.500" />
                <ellipse cx="14" cy="6" rx="13" ry="5" fill="#e0e0e0" stroke="#bbb" />
              </svg>
            </div>
          </div>
        </div>
      </div>
    </main>
  );
}

/* ---------- Simulation Manager window ---------- */
const RUNS = [30.5, 32.32, 33.93, 35.71, 37.3, 39.06, 40.63, 42.41, 44.01, 45.76];
function Plot() {
  const px = (i: number) => 1745 + ((i - 1) * 724) / 9;
  const py = (v: number) => 1150 - (v - 30) * 40.3;
  return (
    <svg viewBox="1622.500 446 936 792" className="block h-[792px] w-[936px] bg-[#efefef] font-['Liberation_Sans',Arial,sans-serif] tracking-normal" fontSize="20" fill="#262626">
      <rect x="1745" y="505.500" width="724" height="644.500" fill="#fff" stroke="#262626" strokeWidth="1.400" />
      {RUNS.map((_, i) => (
        <g key={i}>
          <path d={`M${px(i + 1)} 1150v-7M${px(i + 1)} 505.500v7`} stroke="#262626" strokeWidth="1.400" />
          <text x={px(i + 1)} y="1178" textAnchor="middle">{i + 1}</text>
        </g>
      ))}
      {[30, 32, 34, 36, 38, 40, 42, 44, 46].map((v) => (
        <g key={v}>
          <path d={`M1745 ${py(v)}h7M2469 ${py(v)}h-7`} stroke="#262626" strokeWidth="1.400" />
          <text x="1736" y={py(v) + 8} textAnchor="end">{v}</text>
        </g>
      ))}
      {RUNS.map((v, i) => (
        <circle key={v} cx={px(i + 1)} cy={py(v)} r="6" fill="#6bca5d" />
      ))}
      <text x="2107" y="1206" textAnchor="middle" fontSize="22">RunId</text>
      <text transform="translate(1699 828) rotate(-90)" textAnchor="middle" fontSize="22">sldemo_househeat_output.HeatCost</text>
    </svg>
  );
}
function AxisHeader({ label }: { label: string }) {
  return (
    <div className="flex h-[52px] items-center gap-[8px] border-2 border-[#bdbdbd] bg-[#dedede] pl-[8px] text-[26px] text-[#444]">
      <Down className="w-[14px] text-black" />
      {label}
    </div>
  );
}
function LineInput({ children, width, select, focus }: { children?: React.ReactNode; width: string; select?: boolean; focus?: boolean }) {
  return (
    <div
      className={`flex h-11 shrink-0 items-center overflow-hidden border-2 pl-[8px] text-[24px] whitespace-nowrap text-[#212121] ${width} ${
        select ? "rounded-l-[9px] border-r-0 bg-[#f5f5f5]" : "bg-white"
      } ${focus ? "border-[#488dd8]" : "border-[#7d7d7d]"}`}
    >
      {children}
    </div>
  );
}
function AxisSection({ axis, data, text, from, to, focus }: { axis: string; data: string; text: string; from: string; to: string; focus?: boolean }) {
  return (
    <div>
      <AxisHeader label={`${axis}-AXIS`} />
      <div className="flex h-[210px] flex-col overflow-hidden border-x-2 border-[#bdbdbd] bg-white pt-[18px] pr-[19px] pl-[19px] text-[26px] leading-[30px] text-[#444]">
        <div className="flex h-[50px] overflow-hidden">
          <div className="w-[69px] shrink-0">Data</div>
          <LineInput select focus={focus} width="w-[188px]">{data}</LineInput>
        </div>
        <div className="flex h-[60px] overflow-hidden">
          <div className="w-[69px] shrink-0">{axis}<br />Label</div>
          <LineInput width="w-[192px]">{text}</LineInput>
        </div>
        <div className="flex h-[64px] overflow-hidden">
          <div className="w-[69px] shrink-0">{axis}<br />Limits</div>
          <LineInput width="w-[80px]">{from}</LineInput>
          <div className="w-[30px] shrink-0 pt-[4px] text-center">to</div>
          <LineInput width="w-[90px]">{to}</LineInput>
        </div>
      </div>
    </div>
  );
}
function PlotProperties() {
  return (
    <div className={`flex w-[315px] shrink-0 flex-col border-l-2 border-[#808080] bg-[#f5f5f5] ${HELV}`}>
      <div className="flex h-11 items-center bg-[#1b3e70] pt-[3px] pl-[12px] text-[26px] text-white">
        Plot Properties
        <Kebab className="mr-[33px] ml-auto text-white" />
      </div>
      <div className="flex h-[794px] border-y-2 border-[#bdbdbd]">
        <div className="flex w-[298px] shrink-0 flex-col overflow-hidden text-[25px] text-[#444]">
          <div className="mt-[10px] flex h-11 pl-[10px]">
            <div className="w-[49px] shrink-0 leading-[32px]">Title</div>
            <LineInput width="w-[250px]" />
          </div>
          <div className="mt-[9px] flex h-7 items-center pl-[10px]">
            <div className="w-[49px] shrink-0">Grid</div>
            <div className="h-7 w-7 border-2 border-[#616161] bg-white" />
            <div className="w-[36px] pl-[7px] text-[24px] text-[#212121]">X</div>
            <div className="h-7 w-7 border-2 border-[#616161] bg-white" />
            <div className="pl-[7px] text-[24px] text-[#212121]">Y</div>
          </div>
          <div className="mt-3 mr-[1px]">
            <AxisSection axis="X" data="Value: Set Point" text="RunId" from="1" to="10" focus />
            <AxisSection axis="Y" data="sldemo_househeat_output" text="sldemo\_househeat" from="30" to="46" />
            <AxisHeader label="MARKER COLOR" />
            <div className="h-[140px] overflow-hidden border-x-2 border-[#bdbdbd] bg-white pt-[18px] pr-[19px] pl-[19px] text-[26px] leading-[30px]">
              <div className="flex h-[50px] overflow-hidden">
                <div className="w-[114px] shrink-0">Data</div>
                <LineInput select width="w-[143px]">Simulation Status</LineInput>
              </div>
              <div className="flex h-[64px] overflow-hidden">
                <div className="w-[114px] shrink-0">Label</div>
                <div className="h-16 w-[160px] shrink-0 border-2 border-[#7d7d7d]" />
              </div>
            </div>
          </div>
        </div>
        <div className="w-[15px] shrink-0 bg-[#f5f5f5]">
          <div className="h-[657px] rounded-lg bg-[#7c7c7c]" />
        </div>
      </div>
      <div className="flex flex-1 items-center justify-end bg-[#e5e5e5] pr-[11px]">
        <svg viewBox="0 0 18 24" className="h-6 w-[18px]">
          <path d="M0 0v24l13-12zM14 0h4v24h-4z" fill="#969696" />
        </svg>
      </div>
    </div>
  );
}
function Kebab({ className }: IconProps) {
  return (
    <svg viewBox="0 0 4 20" className={`h-5 w-1 ${className}`}>
      <g fill="currentColor">
        <circle cx="2" cy="2" r="2" />
        <circle cx="2" cy="10" r="2" />
        <circle cx="2" cy="18" r="2" />
      </g>
    </svg>
  );
}
function SimulationManager() {
  const p = "pt-[22px]", g = "mt-[13px]";
  return (
    <div className="absolute top-[102px] left-[1622px] flex h-[1182px] w-[1251px] flex-col overflow-hidden rounded-[20px] bg-[#f5f5f5] shadow-[0_0_0_1px_#000,0_36px_90px_rgba(0,0,0,0.75)]">
      <div className="flex h-[58px] items-center border-t-2 border-b-2 border-t-[#6b6b6b] border-b-black bg-[#383838] pb-[2px] pl-4">
        <div className="h-6 w-6 rounded-full bg-[#ec6a5e]" />
        <div className="ml-4 h-6 w-6 rounded-full bg-[#f4be4f]" />
        <div className="ml-4 h-6 w-6 rounded-full bg-[#61c554]" />
        <div className="ml-[370px] pb-[3px] text-[26px] font-bold tracking-[-0.002em] text-[#b7b7b7]">Simulation Manager*</div>
      </div>
      <div className="flex h-[54px] items-start bg-[#1b3e70] pl-[6px]">
        <div className="mt-1 flex h-[50px] w-[271px] items-center justify-center rounded-t bg-[#f5f5f5] pb-[6px] text-[22px] text-[#212121]">SIMULATION MANAGER</div>
        <div className="mt-1 mr-[19px] ml-auto flex h-11 w-[86px] items-center bg-[#768ca9] pl-[34px] [clip-path:polygon(14px_0,100%_0,100%_100%,14px_100%,0_50%)]">
          <HelpRound className="w-8" />
        </div>
      </div>
      <div className="flex h-[186px] shrink-0 border-b-[3px] border-[#808080]">
        <Section label="FILE" width="w-[172px]">
          <BigButton pad={p} gap={g} width="w-[92px]" icon={<div className="flex h-12 items-center"><Folder className="w-12" /></div>} lines={["Open"]} />
          <BigButton pad={p} gap={g} width="w-[72px]" icon={<div className="flex h-12 items-center"><Disk className="w-11" /></div>} lines={["Save"]} arrow />
        </Section>
        <Divider />
        <Section label="SIMULATIONS" width="w-[163px]">
          <BigButton pad={p} gap={g} width="w-[163px]" off icon={<div className="flex h-12 items-center"><div className="h-10 w-10 rounded-md border-2 border-[#deb5b5] bg-[#ecd3d3]" /></div>} lines={["Stop Job"]} />
        </Section>
        <Divider />
        <Section label="INSPECT" width="w-[448px]">
          <BigButton
            pad={p} gap={g} width="w-[148px]" lines={["Simulation", "Details"]}
            icon={
              <svg viewBox="0 0 48 48" className="h-12 w-12">
                <rect x="1" y="1" width="34" height="34" fill="url(#paper)" stroke="#777" strokeWidth="2" />
                <ModelGlyph />
                <path d="M38 37l9 10" stroke="#444" strokeWidth="4" />
                <circle cx="33" cy="31" r="8.500" fill="#f3f7fa" stroke="#666" strokeWidth="2.500" />
              </svg>
            }
          />
          <BigButton
            pad={p} gap={g} width="w-[186px]" off lines={["Open Selected"]}
            icon={
              <svg viewBox="0 0 48 48" className="h-12 w-12">
                <rect x="1" y="1" width="40" height="40" fill="#f4f4f4" stroke="#cfcfcf" strokeWidth="2" />
                <rect x="1" y="1" width="40" height="10" fill="#d8e7f7" stroke="#b3cce6" strokeWidth="2" />
                <path d="M1 21h40M1 31h40" stroke="#cfcfcf" strokeWidth="2" />
                <path d="M38 25l10 14h-5v9H33v-9h-5z" fill="#cfe0f0" stroke="#b3cce0" />
              </svg>
            }
          />
          <BigButton
            pad={p} gap={g} width="w-[112px]" off lines={["Show", "Results"]}
            icon={
              <svg viewBox="0 0 48 48" className="h-12 w-12">
                <rect x="2" y="2" width="43" height="43" fill="#f9f9f9" stroke="#b5b5b5" strokeWidth="2.500" />
                <path d="M4 32c8-2 8-21 16-21s9 21 16 21c5 0 6-5 8-8" fill="none" stroke="#b5d0ea" strokeWidth="3" />
                <path d="M4 24c4 11 11 11 15 2 4-8 6-15 12-15s8 5 13 10" fill="none" stroke="#eebdb6" strokeWidth="3" />
              </svg>
            }
          />
        </Section>
        <Divider />
        {["RESULTS", "OPTIONS"].map((t) => (
          <React.Fragment key={t}>
            <div className="flex w-[124px] shrink-0 flex-col items-center pt-[76px] pl-[5px] text-[22px] leading-8 tracking-[-0.01em] text-[#555]">
              {t}
              <Down className="mt-[35px] ml-[7px] w-6 text-[#5f5f5f]" />
            </div>
            <Divider />
          </React.Fragment>
        ))}
        <div className="flex flex-1 items-end justify-end pr-[12px] pb-[5px]">
          <Collapse className="w-[22px]" />
        </div>
      </div>
      <div className="flex min-h-0 flex-1">
        <div className="flex w-[936px] flex-col">
          <div className={`flex h-[46px] shrink-0 bg-white text-[24px] ${HELV}`}>
            <div className="flex w-[19px] items-center justify-center border-b-2 border-[#bdbdbd]">
              <svg viewBox="0 0 8 16" className="w-2">
                <path d="M0 1h8M0 5.500h8M0 10h8M0 14.500h8" stroke="#999" strokeWidth="2" />
              </svg>
            </div>
            <div className="flex w-[182px] items-center border-x-2 border-t-[6px] border-b-2 border-[#bdbdbd] border-t-[#999] bg-[#e5e5e5] pt-[2px] pl-[15px] text-[#616161]">Simulations</div>
            <div className="w-[8px] border-b-2 border-[#bdbdbd]" />
            <div className="flex w-[146px] items-center border-x-2 border-t-[6px] border-[#bdbdbd] border-t-[#488dd8] pl-[15px] text-[#212121]">
              Figure 1
              <svg viewBox="0 0 16 16" className="mt-[2px] ml-[10px] w-4">
                <path d="M1 1l14 14M15 1L1 15" stroke="#616161" strokeWidth="1.800" />
              </svg>
            </div>
            <div className="flex flex-1 items-center justify-end border-b-2 border-[#bdbdbd] pt-[3px] pr-[40px]">
              <Kebab className="text-[#616161]" />
            </div>
          </div>
          <Plot />
          <div className={`flex flex-1 border-t-2 border-[#808080] bg-[#e5e5e5] text-[24px] whitespace-nowrap text-[#212121] ${HELV}`}>
            <div className="flex w-[284px] shrink-0 items-center border-r-2 border-[#808080] pl-[15px]">SIMULATION DETAILS</div>
            <div className="w-[409px] shrink-0 pt-[2px] pl-[8px] text-[26px] leading-[30px] text-[#444]">Completed 10 simulations in 8sec</div>
            <div className="w-[84px] shrink-0 pt-[2px] pl-[8px] text-[26px] leading-[30px] text-[#444]">100%</div>
            <div className="h-[28px] w-[115px] shrink-0 border-2 border-r-0 border-black bg-gradient-to-b from-[#5abf86] to-[#256c48]" />
            <div className="flex flex-1 items-center justify-center bg-white">
              <Collapse className="w-6" />
            </div>
          </div>
        </div>
        <PlotProperties />
      </div>
    </div>
  );
}

export default function App() {
  return (
    <div className="relative flex h-[1670px] w-[3024px] flex-col overflow-hidden bg-[#ebebeb] font-[Inter,sans-serif] tracking-[-0.02em]">
      <Gradients />
      <MainRibbon />
      <div className="flex min-h-0 flex-1 border-b-2 border-[#8a8a8a]">
        <LeftPanel />
        <Editor />
      </div>
      <SimulationManager />
    </div>
  );
}
